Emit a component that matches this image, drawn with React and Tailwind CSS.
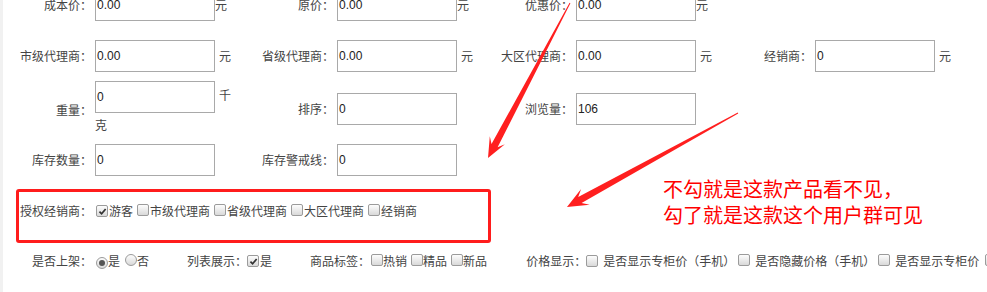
import React from "react";

const CJK = { fontFamily: '"Noto Sans CJK SC", "Microsoft YaHei", sans-serif' };

function arrowPoints(tx, ty, px, py, w0, w1, L, H) {
  const dx = px - tx, dy = py - ty;
  const len = Math.hypot(dx, dy);
  const ux = dx / len, uy = dy / len;
  const nx = -uy, ny = ux;
  const sx = px - ux * L * 0.7, sy = py - uy * L * 0.7;
  const bx = px - ux * L, by = py - uy * L;
  const pts = [
    [tx + nx * w0 / 2, ty + ny * w0 / 2],
    [sx + nx * w1 / 2, sy + ny * w1 / 2],
    [bx + nx * H / 2, by + ny * H / 2],
    [px, py],
    [bx - nx * H / 2, by - ny * H / 2],
    [sx - nx * w1 / 2, sy - ny * w1 / 2],
    [tx - nx * w0 / 2, ty - ny * w0 / 2],
  ];
  return pts.map((p) => p[0].toFixed(1) + "," + p[1].toFixed(1)).join(" ");
}

function Box({ checked }) {
  return (
    <span className="inline-flex w-[12px] h-[12px] shrink-0 rounded-[2px] border border-[#9b9b9b] bg-linear-to-b from-[#fdfdfd] to-[#d9d9d9] items-center justify-center">
      {checked && (
        <svg viewBox="0 0 10 10" className="w-[9px] h-[9px]">
          <path d="M1.6 5.2 L4 7.6 L8.5 2.2" stroke="#333" strokeWidth="1.9" fill="none" />
        </svg>
      )}
    </span>
  );
}

function Radio({ checked }) {
  return (
    <span className="inline-flex w-[12px] h-[12px] shrink-0 rounded-full border border-[#9b9b9b] bg-linear-to-b from-[#fdfdfd] to-[#d9d9d9] items-center justify-center">
      {checked && <span className="w-[6px] h-[6px] rounded-full bg-[#555]" />}
    </span>
  );
}

function Input({ value }) {
  return (
    <div
      className="w-[120px] h-[32px] shrink-0 border border-[#a9a9a9] bg-white pl-[1px] flex items-center text-[12px] text-[#222]"
      style={{ fontFamily: '"Liberation Sans", Arial, sans-serif' }}
    >
      {value}
    </div>
  );
}

function Label({ children, w }) {
  return <div className={`${w} shrink-0 text-right`}>{children}</div>;
}

function Field({ label, value, unit, unitGap, first }) {
  return (
    <div className="flex items-center w-[239px] shrink-0">
      <Label w={first ? "w-[89px]" : "w-[92px]"}>{label}</Label>
      <div className="ml-[3px] flex items-center">
        <Input value={value} />
        {unit && <span className={unitGap ? "ml-[4px]" : "ml-0"}>{unit}</span>}
      </div>
    </div>
  );
}

function Empty() {
  return <div className="w-[239px] shrink-0" />;
}

export default function App() {
  const a1 = arrowPoints(570, 3, 488, 158, 1, 7, 20, 17);
  const a2 = arrowPoints(738, 113, 567, 207, 1, 7, 21, 18);
  return (
    <div className="relative w-[987px] h-[292px] overflow-hidden bg-white flex text-[12px] leading-[20px] text-[#444]" style={CJK}>
      <div className="w-[3px] shrink-0 bg-[#f1f1f1]" />
      <div className="flex flex-col mt-[-11px]">
        {/* row 1 */}
        <div className="flex items-center h-[32px]">
          <Field first label="成本价：" value="0.00" unit="元" />
          <Field label="原价：" value="0.00" unit="元" />
          <Field label="优惠价：" value="0.00" unit="元" />
        </div>
        {/* row 2 */}
        <div className="flex items-center h-[32px] mt-[19px]">
          <Field first label="市级代理商：" value="0.00" unit="元" unitGap />
          <Field label="省级代理商：" value="0.00" unit="元" unitGap />
          <Field label="大区代理商：" value="0.00" unit="元" unitGap />
          <Field label="经销商：" value="0" unit="元" unitGap />
        </div>
        {/* row 3 */}
        <div className="flex items-center h-[54px] mt-[9px]">
          <div className="flex items-center w-[239px] shrink-0">
            <Label w="w-[89px]">
              <span className="relative top-[2px]">重量：</span>
            </Label>
            <div className="ml-[3px] flex flex-col">
              <div className="flex items-center">
                <Input value="0" />
                <span className="ml-[4px] relative top-[-2px]">千</span>
              </div>
              <div className="mt-[2px]">克</div>
            </div>
          </div>
          <div className="mt-[2px] flex">
            <Field label="排序：" value="0" />
            <Field label="浏览量：" value="106" />
          </div>
        </div>
        {/* row 4 */}
        <div className="flex items-center h-[32px] mt-[9px]">
          <Field first label="库存数量：" value="0" />
          <Field label="库存警戒线：" value="0" />
        </div>
        {/* row 5 */}
        <div className="flex items-center h-[20px] mt-[25px]">
          <Label w="w-[89px]">授权经销商：</Label>
          <div className="ml-[4px] flex items-center">
            <Box checked />
            <span className="ml-[1px]">游客</span>
            <span className="ml-[4px]"><Box /></span>
            <span className="ml-[1px]">市级代理商</span>
            <span className="ml-[4px]"><Box /></span>
            <span className="ml-[1px]">省级代理商</span>
            <span className="ml-[4px]"><Box /></span>
            <span className="ml-[1px]">大区代理商</span>
            <span className="ml-[4px]"><Box /></span>
            <span className="ml-[1px]">经销商</span>
          </div>
        </div>
        {/* row 6 */}
        <div className="flex items-center h-[20px] mt-[30px] whitespace-nowrap">
          <Label w="w-[89px]">是否上架：</Label>
          <span className="ml-[4px]"><Radio checked /></span>
          <span>是</span>
          <span className="ml-[5px]"><Radio /></span>
          <span>否</span>
          <span className="ml-[38px]">列表展示：</span>
          <Box checked />
          <span className="ml-[1px]">是</span>
          <span className="ml-[38px]">商品标签：</span>
          <span className="ml-[1px]"><Box /></span>
          <span>热销</span>
          <span className="ml-[4px]"><Box /></span>
          <span>精品</span>
          <span className="ml-[4px]"><Box /></span>
          <span>新品</span>
          <span className="ml-[39px]">价格显示：</span>
          <Box />
          <span className="ml-[5px]">是否显示专柜价（手机）</span>
          <span className="ml-[3px]"><Box /></span>
          <span className="ml-[5px]">是否隐藏价格（手机）</span>
          <span className="ml-[3px]"><Box /></span>
          <span className="ml-[5px]">是否显示专柜价</span>
          <span className="ml-[6px]"><Box /></span>
        </div>
      </div>

      {/* annotations */}
      <div className="absolute left-[16px] top-[189px] w-[475px] h-[54px] border-[3px] border-[#ff1c1c] rounded-[3px]" />
      <div className="absolute left-[663px] top-[176px] text-[20px] leading-[26px] text-[#ff0000]">
        <div>不勾就是这款产品看不见，</div>
        <div>勾了就是这款这个用户群可见</div>
      </div>
      <svg className="absolute left-0 top-0 pointer-events-none" width="987" height="292" viewBox="0 0 987 292">
        <polygon points={a1} fill="#ff1f1f" />
        <polygon points={a2} fill="#ff1f1f" />
      </svg>
    </div>
  );
}
